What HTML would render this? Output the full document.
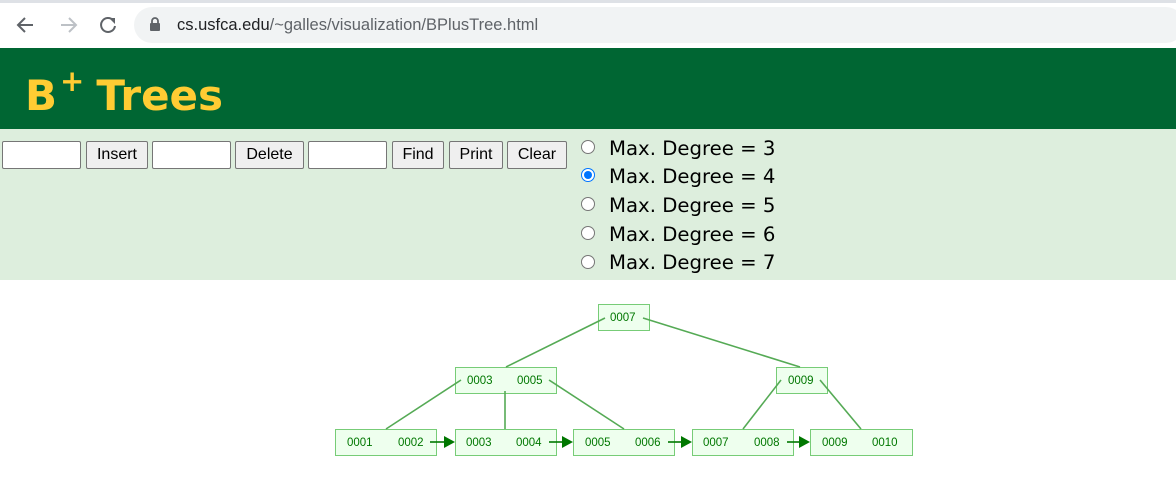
<!DOCTYPE html>
<html><head><meta charset="utf-8"><style>
*{margin:0;padding:0;box-sizing:border-box}
body{width:1176px;height:502px;position:relative;background:#fff;font-family:"Liberation Sans",sans-serif;overflow:hidden}
.a{position:absolute}
.top{left:0;top:0;width:1176px;height:48px;background:#fff;border-top:3px solid #dee1e6}
.url{left:134px;top:7px;width:1050px;height:36px;background:#f1f3f4;border-radius:18px}
.urltxt{left:177px;top:16px;font-size:16.5px;color:#202124}
.hdr{left:0;top:48px;width:1176px;height:81px;background:#006633}
.title{left:25px;top:70px;color:#ffcc33;font:bold 42px "DejaVu Sans",sans-serif;letter-spacing:0}
.ctl{left:0;top:129px;width:1176px;height:151px;background:#ddeedd}
.in{height:28px;background:#fff;border:1px solid #767676;border-radius:2px}
.btn{height:28px;background:#efefef;border:1px solid #767676;border-radius:2px;font-size:16px;color:#000;text-align:center;line-height:26px}
.r{left:581px;width:14px;height:14px;border-radius:50%;border:1px solid #767676;background:#fff}
.rt{left:609px;font:19.7px "DejaVu Sans",sans-serif;color:#000}
</style></head><body>
<div class="a top"></div>
<div class="a url"></div>
<svg class="a" style="left:14px;top:12px" width="120" height="26" viewBox="0 0 120 26">
<path d="M19 13H5M11 6L4 13L11 20" stroke="#5f6368" stroke-width="2" fill="none"/>
<path d="M47 13H61M55 6L62 13L55 20" stroke="#bdc1c6" stroke-width="2" fill="none"/>
<path d="M99 8A7 7 0 1 0 101 14" stroke="#5f6368" stroke-width="2" fill="none"/><path d="M95 6L101 6L101 12Z" fill="#5f6368"/>
</svg>
<svg class="a" style="left:149px;top:16px" width="12" height="16"><rect x="1" y="7" width="10" height="8" rx="1" fill="#5f6368"/><path d="M3 7V5a3 3 0 0 1 6 0V7" stroke="#5f6368" stroke-width="1.8" fill="none"/></svg>
<div class="a urltxt">cs.usfca.edu<span style="color:#5f6368">/~galles/visualization/BPlusTree.html</span></div>
<div class="a hdr"></div>
<div class="a title" style="top:71px">B<sup style="font-size:29px;position:relative;top:-7px;vertical-align:top;margin-left:3px;margin-right:12px">+</sup>Trees</div>
<div class="a ctl"></div>
<div class="a in" style="left:2px;top:141px;width:79px"></div>
<div class="a btn" style="left:86px;top:141px;width:62px">Insert</div>
<div class="a in" style="left:152px;top:141px;width:79px"></div>
<div class="a btn" style="left:235px;top:141px;width:69px">Delete</div>
<div class="a in" style="left:308px;top:141px;width:79px"></div>
<div class="a btn" style="left:392px;top:141px;width:52px">Find</div>
<div class="a btn" style="left:449px;top:141px;width:54px">Print</div>
<div class="a btn" style="left:507px;top:141px;width:60px">Clear</div>
<div class="a r" style="top:140px"></div>
<div class="a r" style="top:168px;border:1.5px solid #0075ff"><div style="width:8px;height:8px;border-radius:50%;background:#0075ff;margin:1.5px"></div></div>
<div class="a r" style="top:197px"></div>
<div class="a r" style="top:226px"></div>
<div class="a r" style="top:255px"></div>
<div class="a rt" style="top:137px">Max. Degree = 3</div>
<div class="a rt" style="top:165px">Max. Degree = 4</div>
<div class="a rt" style="top:194px">Max. Degree = 5</div>
<div class="a rt" style="top:223px">Max. Degree = 6</div>
<div class="a rt" style="top:251px">Max. Degree = 7</div>
<svg class="a" style="left:0;top:0" width="1176" height="502" font-family="Liberation Sans,sans-serif" font-size="11.5" fill="#007700">
<g fill="#eeffee" stroke="#77cc77" stroke-width="1">
<rect x="598.5" y="304.5" width="51" height="26"/>
<rect x="455.5" y="367.5" width="101" height="26"/>
<rect x="776.5" y="367.5" width="51" height="26"/>
<rect x="335.5" y="429.5" width="101" height="26"/>
<rect x="455.5" y="429.5" width="101" height="26"/>
<rect x="573.5" y="429.5" width="101" height="26"/>
<rect x="692.5" y="429.5" width="101" height="26"/>
<rect x="810.5" y="429.5" width="102" height="26"/>
</g>
<g stroke="#55aa55" stroke-width="1.6">
<line x1="605" y1="318" x2="506" y2="367"/>
<line x1="643" y1="318" x2="800" y2="367"/>
<line x1="461" y1="380" x2="386" y2="429"/>
<line x1="505" y1="391" x2="505" y2="429"/>
<line x1="549" y1="380" x2="624" y2="429"/>
<line x1="781" y1="380" x2="743" y2="429"/>
<line x1="820" y1="380" x2="861" y2="429"/>
</g>
<g stroke="#007700" stroke-width="1.6">
<line x1="430" y1="442" x2="446" y2="442"/><line x1="549" y1="442" x2="564" y2="442"/><line x1="668" y1="442" x2="683" y2="442"/><line x1="787" y1="442" x2="801" y2="442"/>
</g>
<g fill="#007700">
<path d="M444 436L455 442L444 448Z"/><path d="M562 436L573 442L562 448Z"/><path d="M681 436L692 442L681 448Z"/><path d="M799 436L810 442L799 448Z"/>
</g>
<text x="610" y="321">0007</text>
<text x="467" y="384">0003</text><text x="517" y="384">0005</text>
<text x="788" y="384">0009</text>
<text x="347" y="446">0001</text><text x="398" y="446">0002</text>
<text x="466" y="446">0003</text><text x="516" y="446">0004</text>
<text x="585" y="446">0005</text><text x="635" y="446">0006</text>
<text x="703" y="446">0007</text><text x="754" y="446">0008</text>
<text x="822" y="446">0009</text><text x="872" y="446">0010</text>
</svg>
</body></html>
